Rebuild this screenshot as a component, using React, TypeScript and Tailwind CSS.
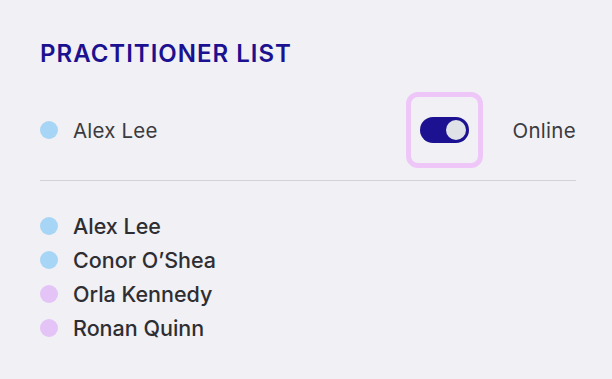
import React, { useState } from 'react';

type Practitioner = { name: string; color: string };

const practitioners: Practitioner[] = [
  { name: 'Alex Lee', color: 'bg-[#a7d5f5]' },
  { name: 'Conor O’Shea', color: 'bg-[#a7d5f5]' },
  { name: 'Orla Kennedy', color: 'bg-[#e4c3f7]' },
  { name: 'Ronan Quinn', color: 'bg-[#e4c3f7]' },
];

export default function App() {
  const [online, setOnline] = useState(true);

  return (
    <div
      className="min-h-screen bg-[#f0f0f5] pl-[40px] pr-[36px] pt-[38px]"
      style={{ fontFamily: 'Inter, "Liberation Sans", sans-serif' }}
    >
      <h1 className="text-[24px] leading-[32px] font-semibold tracking-[1px] text-[#1c1190]">
        PRACTITIONER LIST
      </h1>

      {/* Current practitioner status */}
      <div className="mt-[22px] flex h-[76px] items-center">
        <span className="h-[18px] w-[18px] rounded-full bg-[#a7d5f5]" />
        <span className="ml-[15px] mt-[3px] text-[20.5px] tracking-[0.2px] text-[#3b3b3f]">Alex Lee</span>
        <div className="ml-auto flex h-[76px] w-[77px] items-center justify-center rounded-[12px] border-[5px] border-[#eec6f8]">
          <button
            onClick={() => setOnline(!online)}
            className={`flex h-[26px] w-[49px] items-center rounded-full px-[3px] ${online ? 'justify-end bg-[#1c1190]' : 'justify-start bg-[#c9c9d2]'}`}
          >
            <span className="h-[20px] w-[20px] rounded-full bg-[#dfe3e8]" />
          </button>
        </div>
        <span className="ml-[29px] mt-[3px] text-[20.5px] tracking-[0.3px] text-[#3b3b3f]">{online ? 'Online' : 'Offline'}</span>
      </div>

      <div className="mt-[12px] h-px bg-[#d2d2d9]" />

      <ul className="mt-[35px] flex flex-col gap-[14px]">
        {practitioners.map((p) => (
          <li key={p.name} className="flex h-[20px] items-center">
            <span className={`h-[18px] w-[18px] rounded-full ${p.color}`} />
            <span className="ml-[15px] text-[21.5px] font-medium text-[#2e2e32]">{p.name}</span>
          </li>
        ))}
      </ul>
    </div>
  );
}
